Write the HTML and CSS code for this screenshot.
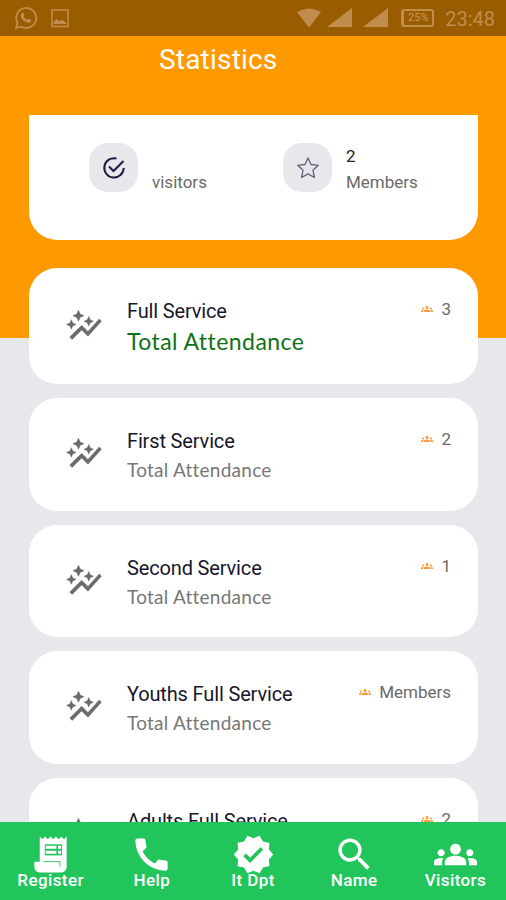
FILE: index.html
```html
<!DOCTYPE html>
<html lang="en">

<head>
    <meta charset="UTF-8">
    <meta name="viewport" content="width=device-width, initial-scale=1.0">
    <title>Statistics</title>
    <link rel="stylesheet" href="styles.css">
</head>

<body>
    <!-- shared icons -->
    <svg class="sprite" aria-hidden="true">
        <symbol id="graph" viewBox="0 0 24 24">
            <path d="M14.06 9.94L12 9l2.06-.94L15 6l.94 2.06L18 9l-2.06.94L15 12l-.94-2.06zM4 14l.94-2.06L7 11l-2.06-.94L4 8l-.94 2.06L1 11l2.06.94L4 14zm4.5-5l1.09-2.41L12 5.5 9.59 4.41 8.5 2 7.41 4.41 5 5.5l2.41 1.09L8.5 9zm-4 11.5l6-6.01 4 4L23 8.93l-1.41-1.41-7.09 7.97-4-4L3 19l1.5 1.5z"/>
        </symbol>
        <symbol id="groups" viewBox="0 0 24 24">
            <path d="M12 12.75c1.63 0 3.07.39 4.24.9 1.08.48 1.76 1.56 1.76 2.73V18H6v-1.61c0-1.18.68-2.26 1.76-2.73 1.17-.52 2.61-.91 4.24-.91zM4 13c1.1 0 2-.9 2-2s-.9-2-2-2-2 .9-2 2 .9 2 2 2zm1.13 1.1c-.37-.06-.74-.1-1.13-.1-.99 0-1.93.21-2.78.58C.48 14.9 0 15.62 0 16.43V18h4.5v-1.61c0-.83.23-1.61.63-2.29zM20 13c1.1 0 2-.9 2-2s-.9-2-2-2-2 .9-2 2 .9 2 2 2zm4 3.43c0-.81-.48-1.53-1.22-1.85-.85-.37-1.79-.58-2.78-.58-.39 0-.76.04-1.13.1.4.68.63 1.46.63 2.29V18H24v-1.57zM12 6c1.66 0 3 1.34 3 3s-1.34 3-3 3-3-1.34-3-3 1.34-3 3-3z"/>
        </symbol>
    </svg>

    <div class="status-bar">
        <div class="status-left">
            <svg width="24" height="24" viewBox="0 0 24 24" fill="none" stroke="currentColor">
                <path stroke-width="1.8" d="M2 22l1.5-5.2A10 10 0 1 1 7.300 20.600z"/>
                <path fill="currentColor" stroke="none" d="M8.300 6.800c.5-.4 1-.2 1.200.3l.8 1.900c.1.500-.8 1.100-.7 1.500.9 1.700 2 2.600 3.700 3.300.5.100 1-1.100 1.500-1l2 1c.5.300.4.900.2 1.500-.5 1.300-2.200 1.800-3.500 1.400-3.200-.9-5.200-2.700-6.400-5.400-.7-1.700-.3-3.500 1.200-4.500z"/>
            </svg>
            <svg class="picture" width="18" height="19" viewBox="0 0 18 19">
                <path fill="none" stroke="currentColor" stroke-width="1.500" d="M1 1h16v16.500H1z"/>
                <path fill="currentColor" d="M2.500 15v-2l3-3 3 2 3-1 4 3v1z"/>
            </svg>
        </div>
        <div class="status-right">
            <svg width="26" height="20" viewBox="0 0 26 20"><path fill="currentColor" d="M1 4Q13-3 25 4L13 19.500z"/></svg>
            <svg class="signal-one" width="25" height="20" viewBox="0 0 25 20"><path fill="currentColor" d="M25 0v19H0z"/></svg>
            <svg class="signal-two" width="25" height="20" viewBox="0 0 25 20"><path fill="currentColor" d="M25 0v19H0z"/></svg>
            <div class="battery">25%</div>
            <span class="clock">23:48</span>
        </div>
    </div>

    <div class="content">
        <h1>Statistics</h1>

        <div class="summary">
            <div class="summary-item">
                <div class="badge">
                    <svg width="24" height="24" viewBox="0 0 24 24" fill="none" stroke="#1c1b42" stroke-width="2">
                        <path d="M14.500 2.500A9.700 9.700 0 1 0 21.700 12M7 10.500l4.500 4.500L21.500 5"/>
                    </svg>
                </div>
                <div class="summary-text">
                    <strong></strong>
                    <span>visitors</span>
                </div>
            </div>
            <div class="summary-item">
                <div class="badge">
                    <svg width="24" height="24" viewBox="0 0 24 24" fill="none" stroke="#62667a" stroke-width="1.300" stroke-linejoin="round">
                        <path d="M12 2l3 6.500 7.300.8-5.400 4.900 1.500 7.300L12 17.900l-6.400 3.600 1.500-7.300-5.400-4.900L9 8.500z"/>
                    </svg>
                </div>
                <div class="summary-text">
                    <strong>2</strong>
                    <span>Members</span>
                </div>
            </div>
        </div>

        <div class="card card-main">
            <svg class="graph"><use href="#graph"/></svg>
            <div class="card-text">
                <h2>Full Service</h2>
                <p>Total Attendance</p>
            </div>
            <div class="count"><svg><use href="#groups"/></svg>3</div>
        </div>
        <div class="card">
            <svg class="graph"><use href="#graph"/></svg>
            <div class="card-text">
                <h2>First Service</h2>
                <p>Total Attendance</p>
            </div>
            <div class="count"><svg><use href="#groups"/></svg>2</div>
        </div>
        <div class="card">
            <svg class="graph"><use href="#graph"/></svg>
            <div class="card-text">
                <h2>Second Service</h2>
                <p>Total Attendance</p>
            </div>
            <div class="count"><svg><use href="#groups"/></svg>1</div>
        </div>
        <div class="card">
            <svg class="graph"><use href="#graph"/></svg>
            <div class="card-text">
                <h2>Youths Full Service</h2>
                <p>Total Attendance</p>
            </div>
            <div class="count"><svg><use href="#groups"/></svg>Members</div>
        </div>
        <!-- runs on under the navbar -->
        <div class="card">
            <svg class="graph"><use href="#graph"/></svg>
            <div class="card-text">
                <h2>Adults Full Service</h2>
            </div>
            <div class="count"><svg><use href="#groups"/></svg>2</div>
        </div>
    </div>

    <div class="navbar">
        <a>
            <svg viewBox="0 0 24 24">
                <path d="M19.500 3.500L18 2l-1.500 1.500L15 2l-1.500 1.500L12 2l-1.500 1.500L9 2 7.500 3.500 6 2v14H3v3c0 1.660 1.340 3 3 3h12c1.660 0 3-1.340 3-3V2z"/>
                <path fill="#22c55b" d="M8.800 6.300h9.600v6.200H8.800z"/>
                <path d="M9.300 7.100h6v1.700h-6zM16.200 7.100h1.700v1.700h-1.700zM9.300 9.900h6v1.700h-6zM16.200 9.900h1.700v1.700h-1.700z"/>
                <path fill="none" stroke="#22c55b" stroke-width=".5" d="M8 16h9.300v2.800"/>
            </svg>
            Register
        </a>
        <a>
            <svg viewBox="0 0 24 24"><path d="M20.010 15.380c-1.230 0-2.420-.2-3.530-.56-.35-.12-.74-.03-1.010.24l-1.570 1.970c-2.830-1.350-5.480-3.900-6.890-6.830l1.950-1.660c.27-.28.35-.67.24-1.020-.37-1.110-.56-2.300-.56-3.530 0-.54-.45-.99-.99-.99H4.190C3.650 3 3 3.240 3 3.990 3 13.280 10.730 21 20.010 21c.71 0 .99-.63.99-1.180v-3.450c0-.54-.45-.99-.99-.99z"/></svg>
            Help
        </a>
        <a>
            <svg viewBox="0 0 24 24"><path d="M23 12l-2.440-2.790.34-3.690-3.610-.82-1.890-3.200L12 2.960 8.600 1.500 6.710 4.690 3.100 5.500l.34 3.700L1 12l2.440 2.790-.34 3.700 3.610.82L8.600 22.500l3.400-1.470 3.400 1.460 1.890-3.190 3.610-.82-.34-3.690L23 12zm-12.910 4.720l-3.800-3.810 1.480-1.480 2.320 2.330 5.850-5.870 1.480 1.480-7.330 7.350z"/></svg>
            It Dpt
        </a>
        <a>
            <svg viewBox="0 0 24 24"><path d="M15.500 14h-.79l-.28-.27C15.410 12.590 16 11.110 16 9.500 16 5.910 13.090 3 9.500 3S3 5.910 3 9.500 5.910 16 9.500 16c1.610 0 3.090-.59 4.230-1.570l.27.28v.79l5 4.990L20.490 19l-4.990-5zm-6 0C7.010 14 5 11.990 5 9.500S7.010 5 9.500 5 14 7.010 14 9.500 11.990 14 9.500 14z"/></svg>
            Name
        </a>
        <a>
            <svg><use href="#groups"/></svg>
            Visitors
        </a>
    </div>
</body>

</html>
```
FILE: styles.css
```css
* {
    box-sizing: border-box;
    margin: 0;
    padding: 0;
}

body {
    display: flex;
    flex-direction: column;
    height: 900px;
    overflow: hidden;
    font-family: Roboto, sans-serif;
    background: linear-gradient(#ff9900 338px, #e7e8ec 338px);
}

.sprite {
    display: none;
}

.status-bar {
    display: flex;
    justify-content: space-between;
    flex-shrink: 0;
    height: 36px;
    padding: 6px 11px 0 14px;
    background: #995c00;
    color: #c08d4d;
}

.status-left,
.status-right {
    display: flex;
    align-items: flex-start;
}

.picture {
    margin: 3px 0 0 13px;
}

.status-right {
    padding-top: 2px;
}

.signal-one {
    margin-left: 5px;
}

.signal-two {
    margin-left: 11px;
}

.battery {
    width: 33px;
    height: 18px;
    margin: 1px 0 0 13px;
    border: 2px solid #c08d4d;
    border-left-width: 3px;
    border-radius: 3px;
    font-size: 11px;
    font-weight: 500;
    line-height: 14px;
    text-align: center;
}

.clock {
    margin-left: 11px;
    font-size: 20px;
    line-height: 23px;
}

.content {
    flex: 1;
    min-height: 0;
    overflow: hidden;
    padding: 0 28px 0 29px;
}

h1 {
    height: 79px;
    padding: 8px 0 0 130px;
    color: white;
    font-size: 28px;
    font-weight: 400;
    line-height: 32px;
    letter-spacing: 0.2px;
}

.summary {
    display: flex;
    height: 125px;
    margin-bottom: 28px;
    padding: 28px 0 0 60px;
    background: white;
    border-radius: 0 0 28px 28px;
}

.summary-item {
    display: flex;
    width: 194px;
}

.badge {
    display: flex;
    align-items: center;
    justify-content: center;
    width: 49px;
    height: 49px;
    margin-right: 14px;
    border-radius: 19px;
    background: #e7e8ec;
}

.summary-text {
    color: #6a6a6a;
    font-size: 17px;
    line-height: 26px;
}

.summary-text strong {
    display: block;
    height: 26px;
    color: #222;
    font-weight: 400;
}

.card {
    display: flex;
    align-items: flex-start;
    height: 112.5px;
    margin-bottom: 14px;
    padding: 31px 27px 0 36px;
    background: white;
    border-radius: 28px;
}

.graph {
    width: 38px;
    height: 38px;
    margin: 6px 24px 0 0;
    fill: #6b6b6b;
    stroke: #6b6b6b;
    stroke-width: 0.3px;
}

.card h2 {
    color: #17172b;
    font-size: 20px;
    font-weight: 400;
    line-height: 24px;
    letter-spacing: -0.15px;
}

.card p {
    margin-top: 4px;
    color: #777;
    font-family: Lato, sans-serif;
    font-size: 19px;
    line-height: 26px;
    letter-spacing: 0.25px;
}

.card-main {
    height: 116px;
}

.card-main .graph {
    margin-top: 8px;
}

.card-main p {
    margin-top: 3px;
    color: #0f7216;
    font-size: 23px;
    line-height: 30px;
    letter-spacing: 0.45px;
}

.count {
    display: flex;
    align-items: center;
    margin-left: auto;
    color: #6a6a6a;
    font-size: 17px;
    line-height: 20px;
}

.count svg {
    width: 12px;
    height: 12px;
    margin-right: 8px;
    fill: #ff9a3c;
}

.navbar {
    display: flex;
    flex-shrink: 0;
    height: 78px;
    padding-top: 11px;
    background: #22c55b;
}

.navbar a {
    display: flex;
    flex: 1;
    flex-direction: column;
    align-items: center;
    color: white;
    font-size: 17px;
    font-weight: 500;
    line-height: 20px;
    letter-spacing: 0.4px;
}

.navbar svg {
    width: 43px;
    height: 43px;
    margin-bottom: -6px;
    fill: white;
}
```
